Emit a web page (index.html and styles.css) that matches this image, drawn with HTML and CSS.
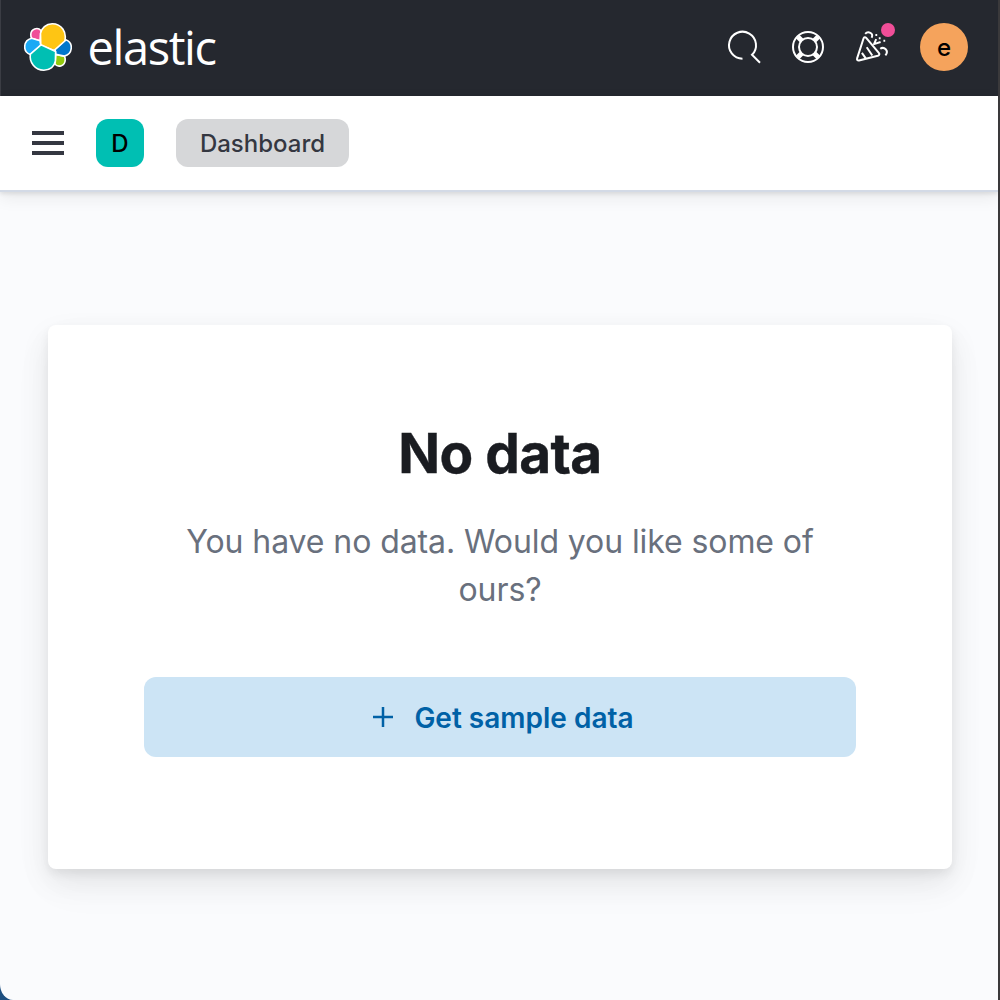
FILE: index.html
```html
<!DOCTYPE html>
<html lang="en">
<head>
<meta charset="utf-8">
<title>Dashboard - Elastic</title>
<link rel="stylesheet" href="styles.css">
</head>
<body>
<div class="app">
  <header class="topbar">
    <a class="brand">
      <svg class="brand-mark" width="48" height="48" viewBox="0 0 48 48" stroke="#fff" stroke-width="1.6" stroke-linejoin="round">
        <path fill="#f04e98" d="M17 7.5C13.5 3.6 7 6 6.8 11.2C6.7 13 7 14.2 7.6 15.3L16 17.8Z"/>
        <path fill="#1ba9f5" d="M7.6 15.3C-.8 17.4-1.8 28.6 6.2 31.6L16.8 22.4L16 17.8Z"/>
        <path fill="#93c90e" d="M31 41.3C34.6 45 41 42.6 41.2 37.2C41.3 35.5 41 34.2 40.4 33.1L31.8 31.4Z"/>
        <path fill="#0077cc" d="M40.4 33.1C48.8 31 49.8 19.8 41.8 16.8L31 26.2L31.8 31.4Z"/>
        <path fill="#fec514" d="M16.8 22.4L30.2 27.4L40.8 18C43 9 37.6.8 28.2.8C22 .8 17.5 5 16.5 10.4Z"/>
        <path fill="#00bfb3" d="M17 21.8L6.4 31.2C5 39.4 11 47.2 19.8 47.2C26.2 47.2 30.4 43.2 31.4 38L31.6 28.4Z"/>
      </svg>
      <span class="brand-name">elastic</span>
    </a>
    <div class="tools">
      <svg width="32" height="32" viewBox="0 0 32 32" class="icon">
        <path d="M14.5 27.7A13.5 13.5 0 1 1 24 23.8L32 31.7"/>
      </svg>
      <svg width="32" height="32" viewBox="0 0 32 32" class="icon">
        <circle cx="16" cy="16" r="15"/><circle cx="16" cy="16" r="9"/>
        <path class="spokes" d="M5.8 5.8L9.8 9.8M26.2 5.8L22.2 9.8M5.8 26.2L9.8 22.2M26.2 26.2L22.2 22.2"/>
      </svg>
      <span class="news">
        <svg width="32" height="32" viewBox="0 0 32 32" class="icon round">
          <path d="M7.6 7.2L1.1 27.4C.7 28.8 1.6 29.8 3 29.5L21.8 24.8C23.5 24.3 23.8 23 22.8 21.8L10.2 6.9C9.3 5.9 8 6 7.6 7.2Z"/>
          <path d="M10.7 16.3L16.3 24.5M5.9 21.8L9.8 27.3M9.2 2.8C11.8-.1 18.2 1.8 15.6 6.8M24.2 17.8C28 15.1 33.4 19.6 29.4 24.4M20.2 8.2L18 13.1L24.6 11"/>
          <path class="specks" d="M20.3 2.9v2M23.7 6.2v2M28.3 8.8v2"/>
        </svg>
        <span class="news-dot"></span>
      </span>
      <span class="avatar">e</span>
    </div>
  </header>
  <nav class="navbar">
    <span class="menu"><i></i><i></i><i></i></span>
    <span class="space">D</span>
    <span class="crumb">Dashboard</span>
  </nav>
  <main class="content">
    <section class="card">
      <h1>No data</h1>
      <p>You have no data. Would you like some of ours?</p>
      <button class="action" type="button">
        <svg width="22" height="22" viewBox="0 0 22 22"><path d="M11 1v20M1 11h20"/></svg>
        <span>Get sample data</span>
      </button>
    </section>
  </main>
</div>
</body>
</html>
```
FILE: styles.css
```css
* { box-sizing: border-box; }
body { margin: 0; background: linear-gradient(90deg, #1d4f80 50%, #3a393b 50%); font-family: Inter, sans-serif; }
.app { width: 998px; height: 1000px; display: flex; flex-direction: column; background: #fafbfd; border-bottom-left-radius: 13px 16px; overflow: hidden; }
.topbar { height: 96px; flex: none; padding: 0 30px 2px 23px; display: flex; align-items: center; justify-content: space-between; background: #25282f; border-left: 1px solid #3b3d44; }
.brand { display: flex; align-items: center; gap: 15.5px; }
.brand-mark { display: block; }
.brand-name { font: 400 47px/72px "Open Sans", sans-serif; letter-spacing: -1.4px; color: #fff; }
.tools { display: flex; align-items: center; gap: 32px; }
.icon { display: block; fill: none; stroke: #fff; stroke-width: 2; overflow: visible; }
.icon.round { stroke-linejoin: round; }
.icon .spokes { stroke-width: 5; }
.icon .specks { stroke-width: 1.8; }
.news { position: relative; width: 32px; }
.news-dot { position: absolute; left: 25px; top: -8px; width: 14px; height: 14px; border-radius: 50%; background: #f04e98; }
.avatar { width: 48px; height: 48px; border-radius: 50%; background: #f5a35c; display: flex; align-items: center; justify-content: center; font-size: 24px; font-weight: 500; color: #000; }
.navbar { height: 96px; flex: none; padding: 0 32px; display: flex; align-items: center; gap: 32px; background: #fff; border-bottom: 2px solid #d3dae6; box-shadow: 0 2px 4px rgba(0,0,0,.09), 0 6px 16px rgba(0,0,0,.07); position: relative; }
.menu { width: 32px; height: 24px; display: flex; flex-direction: column; justify-content: space-between; }
.menu i { height: 4px; background: #343741; }
.space { width: 48px; height: 48px; border-radius: 12px; background: #00bfb3; display: flex; align-items: center; justify-content: center; font-size: 24px; font-weight: 500; color: #000; }
.crumb { height: 48px; width: 173px; padding-top: 1px; border-radius: 12px; background: #d6d7d9; color: #343741; font-size: 24px; font-weight: 500; line-height: 48px; text-align: center; }
.content { flex: 1; padding: 133px 46px 0 48px; }
.card { height: 544px; padding: 96px; background: #fff; border-radius: 8px; text-align: center; box-shadow: 0 5px 10px rgba(0,0,0,.06), 0 12px 30px rgba(0,0,0,.08), 0 18px 48px rgba(0,0,0,.03); }
h1 { margin: 0; font-size: 55px; letter-spacing: -.6px; line-height: 64px; font-weight: 700; color: #1a1c21; -webkit-text-stroke: .4px #1a1c21; }
p { margin: 33px 0 0; font-size: 32px; letter-spacing: -.09px; line-height: 48px; color: #69707d; }
.action { margin-top: 63px; width: 100%; height: 80px; padding: 0 0 0 6px; border: 0; border-radius: 12px; background: #cce4f5; color: #0061a6; font: 600 28px Inter, sans-serif; display: flex; align-items: center; justify-content: center; gap: 20px; }
.action span { padding-top: 2px; }
.action path { stroke: currentColor; stroke-width: 2.5; }
```
